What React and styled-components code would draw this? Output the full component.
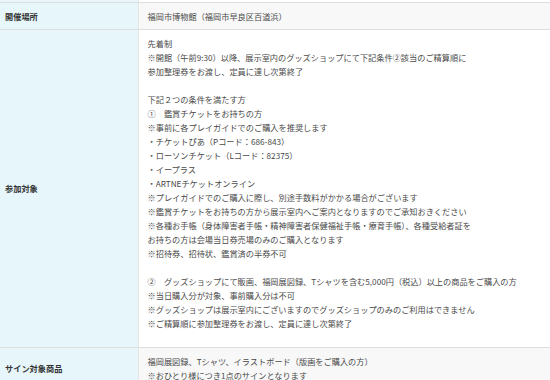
import React from "react";
import styled, { createGlobalStyle } from "styled-components";

const Global = createGlobalStyle`
  html, body { margin: 0; padding: 0; background: #fff; }
  body {
    font-family: "Noto Sans CJK JP", "Noto Sans", sans-serif;
    -webkit-font-smoothing: antialiased;
  }
`;

const Table = styled.table`
  width: 100%;
  border-collapse: collapse;
  table-layout: fixed;
  font-size: 8.2px;
  line-height: 14px;
`;

const Row = styled.tr`
  border-bottom: 1px solid #dedede;
`;

const Label = styled.th`
  width: 138px;
  box-sizing: border-box;
  background: #e6f6fb;
  color: #333;
  font-weight: 700;
  text-align: left;
  vertical-align: middle;
  padding: ${(p) => (p.$stub ? "0" : "6px 5px")};
  height: ${(p) => (p.$stub ? "2px" : "auto")};
  border-right: 1px solid #e4e4e4;
`;

const Cell = styled.td`
  background: ${(p) => (p.$alt ? "#f8f8f8" : "#ffffff")};
  color: #4a4a4a;
  vertical-align: top;
  padding: ${(p) => (p.$stub ? "0" : "6px 9px")};
  padding-bottom: ${(p) => (p.$extra ? `${p.$extra}px` : undefined)};
`;

const Line = styled.div`
  min-height: 14px;
  white-space: nowrap;
`;

const Lines = ({ items }) =>
  items.map((t, i) => <Line key={i}>{t}</Line>);

const participants = [
  "先着制",
  "※開館（午前9:30）以降、展示室内のグッズショップにて下記条件②該当のご精算順に",
  "参加整理券をお渡し、定員に達し次第終了",
  "",
  "下記２つの条件を満たす方",
  "①　鑑賞チケットをお持ちの方",
  "※事前に各プレイガイドでのご購入を推奨します",
  "・チケットぴあ（Pコード：686-843）",
  "・ローソンチケット（Lコード：82375）",
  "・イープラス",
  "・ARTNEチケットオンライン",
  "※プレイガイドでのご購入に際し、別途手数料がかかる場合がございます",
  "※鑑賞チケットをお持ちの方から展示室内へご案内となりますのでご承知おきください",
  "※各種お手帳（身体障害者手帳・精神障害者保健福祉手帳・療育手帳）、各種受給者証を",
  "お持ちの方は会場当日券売場のみのご購入となります",
  "※招待券、招待状、鑑賞済の半券不可",
  "",
  "②　グッズショップにて販画、福岡展図録、Tシャツを含む5,000円（税込）以上の商品をご購入の方",
  "※当日購入分が対象、事前購入分は不可",
  "※グッズショップは展示室内にございますのでグッズショップのみのご利用はできません",
  "※ご精算順に参加整理券をお渡し、定員に達し次第終了",
];

const signItems = [
  "福岡展図録、Tシャツ、イラストボード（版画をご購入の方）",
  "※おひとり様につき1点のサインとなります",
];

export default function App() {
  return (
    <>
      <Global />
      <Table>
        <tbody>
          <Row>
            <Label $stub />
            <Cell $stub />
          </Row>
          <Row>
            <Label>開催場所</Label>
            <Cell $alt>
              <Lines items={["福岡市博物館（福岡市早良区百道浜）"]} />
            </Cell>
          </Row>
          <Row>
            <Label>参加対象</Label>
            <Cell $extra={17}>
              <Lines items={participants} />
            </Cell>
          </Row>
          <Row>
            <Label>サイン対象商品</Label>
            <Cell $alt>
              <Lines items={signItems} />
            </Cell>
          </Row>
        </tbody>
      </Table>
    </>
  );
}
